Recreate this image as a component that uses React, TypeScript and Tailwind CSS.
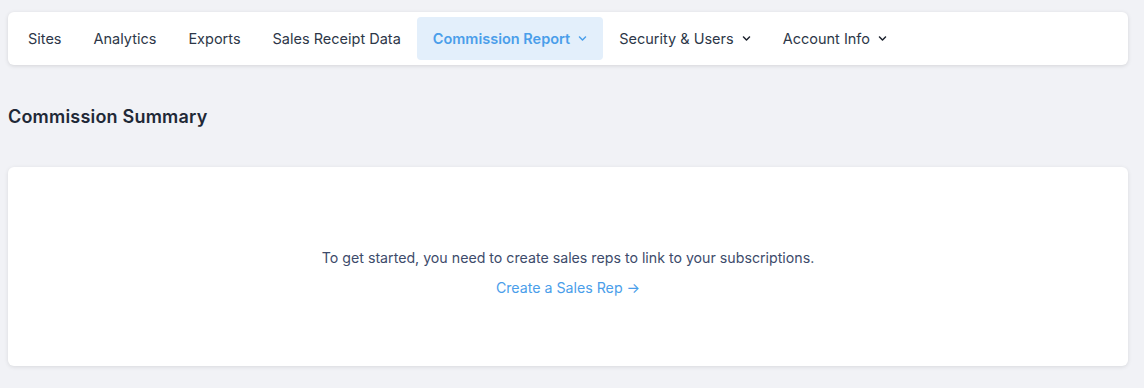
import { FaChevronDown } from 'react-icons/fa';

const navItems = [
  { label: 'Sites' },
  { label: 'Analytics' },
  { label: 'Exports' },
  { label: 'Sales Receipt Data' },
  { label: 'Commission Report', active: true, dropdown: true },
  { label: 'Security & Users', dropdown: true },
  { label: 'Account Info', dropdown: true },
];

export default function App() {
  return (
    <div
      className="min-h-[388px] bg-[#f1f2f6] pl-2 pr-4 pt-3 text-[#2d3748]"
      style={{ fontFamily: 'Inter, "Noto Sans", sans-serif' }}
    >
      {/* Top nav */}
      <nav className="flex h-[53px] items-center rounded-md bg-white px-1 shadow-[0_1px_4px_rgba(0,0,0,0.12)]">
        {navItems.map((item) => (
          <a
            key={item.label}
            href="#"
            className={`flex h-[43px] items-center gap-[8px] rounded px-4 text-[14.5px] ${
              item.active ? 'bg-[#e3effb] font-semibold text-[#4a9eea]' : 'text-[#2d3748]'
            }`}
          >
            {item.label}
            {item.dropdown && (
              <FaChevronDown
                size={9}
                className={item.active ? 'text-[#4a9eea]' : 'text-[#1a202c]'}
              />
            )}
          </a>
        ))}
      </nav>

      {/* Heading */}
      <h1 className="mt-[40px] text-[18px] font-semibold leading-[24px] tracking-[0.2px] text-[#1f2937]">
        Commission Summary
      </h1>

      {/* Empty state */}
      <div className="mt-[38px] flex h-[199px] flex-col items-center justify-center rounded-md bg-white pt-[12px] shadow-[0_1px_4px_rgba(0,0,0,0.1)]">
        <p className="text-[14.2px] leading-[20px] text-[#3d4b6b]">
          To get started, you need to create sales reps to link to your subscriptions.
        </p>
        <a href="#" className="mt-[10px] text-[14.2px] leading-[20px] text-[#4a9eea]">
          Create a Sales Rep →
        </a>
      </div>
    </div>
  );
}
